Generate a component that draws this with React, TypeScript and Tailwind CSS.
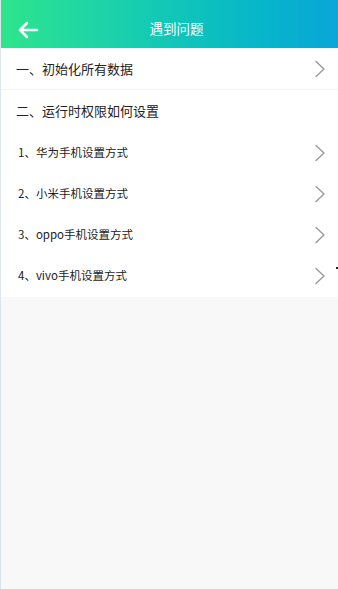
import React from "react";

const Chevron = () => (
  <svg width="12" height="18" viewBox="0 0 12 18" fill="none">
    <path d="M2 1.5 L10 9 L2 16.5" stroke="#9a9a9a" strokeWidth="1.4" strokeLinecap="round" strokeLinejoin="round" />
  </svg>
);

const items = ["1、华为手机设置方式", "2、小米手机设置方式", "3、oppo手机设置方式", "4、vivo手机设置方式"];

export default function App() {
  return (
    <div
      className="relative w-[338px] h-[589px] bg-[#f8f8f8] border-l border-[#dfe5ef] flex flex-col overflow-hidden"
      style={{ fontFamily: '"Noto Sans CJK SC", "Noto Sans", sans-serif' }}
    >
      <div className="h-[48px] pt-[12px] flex items-center relative bg-gradient-to-r from-[#2ee58c] to-[#0aa6d8] shrink-0">
        <div className="w-[52px] flex items-center justify-start pl-[16px]">
          <svg width="22" height="18" viewBox="0 0 22 18" fill="none">
            <path d="M20 9 H3 M10 2 L3 9 L10 16" stroke="white" strokeWidth="2.6" strokeLinecap="round" strokeLinejoin="round" />
          </svg>
        </div>
        <div className="absolute inset-0 pt-[8px] pl-[14px] flex items-center justify-center text-white text-[13.5px] pointer-events-none">
          遇到问题
        </div>
      </div>
      <div className="bg-white">
        <div className="h-[42px] flex items-center justify-between pl-[15px] pr-[12px] border-b border-[#f2f2f2]">
          <span className="text-[13px] text-[#222]">一、初始化所有数据</span>
          <Chevron />
        </div>
        <div className="h-[42px] flex items-center pl-[15px]">
          <span className="text-[13px] text-[#222]">二、运行时权限如何设置</span>
        </div>
        <div className="flex flex-col pb-[1px]">
          {items.map((t) => (
            <div key={t} className="h-[41px] flex items-center justify-between pl-[17px] pr-[12px]">
              <span className="text-[11.5px] text-[#222]">{t}</span>
              <Chevron />
            </div>
          ))}
        </div>
      </div>
      <div className="absolute left-[335px] top-[267px] w-[2px] h-[2px] bg-[#222]" />
    </div>
  );
}
